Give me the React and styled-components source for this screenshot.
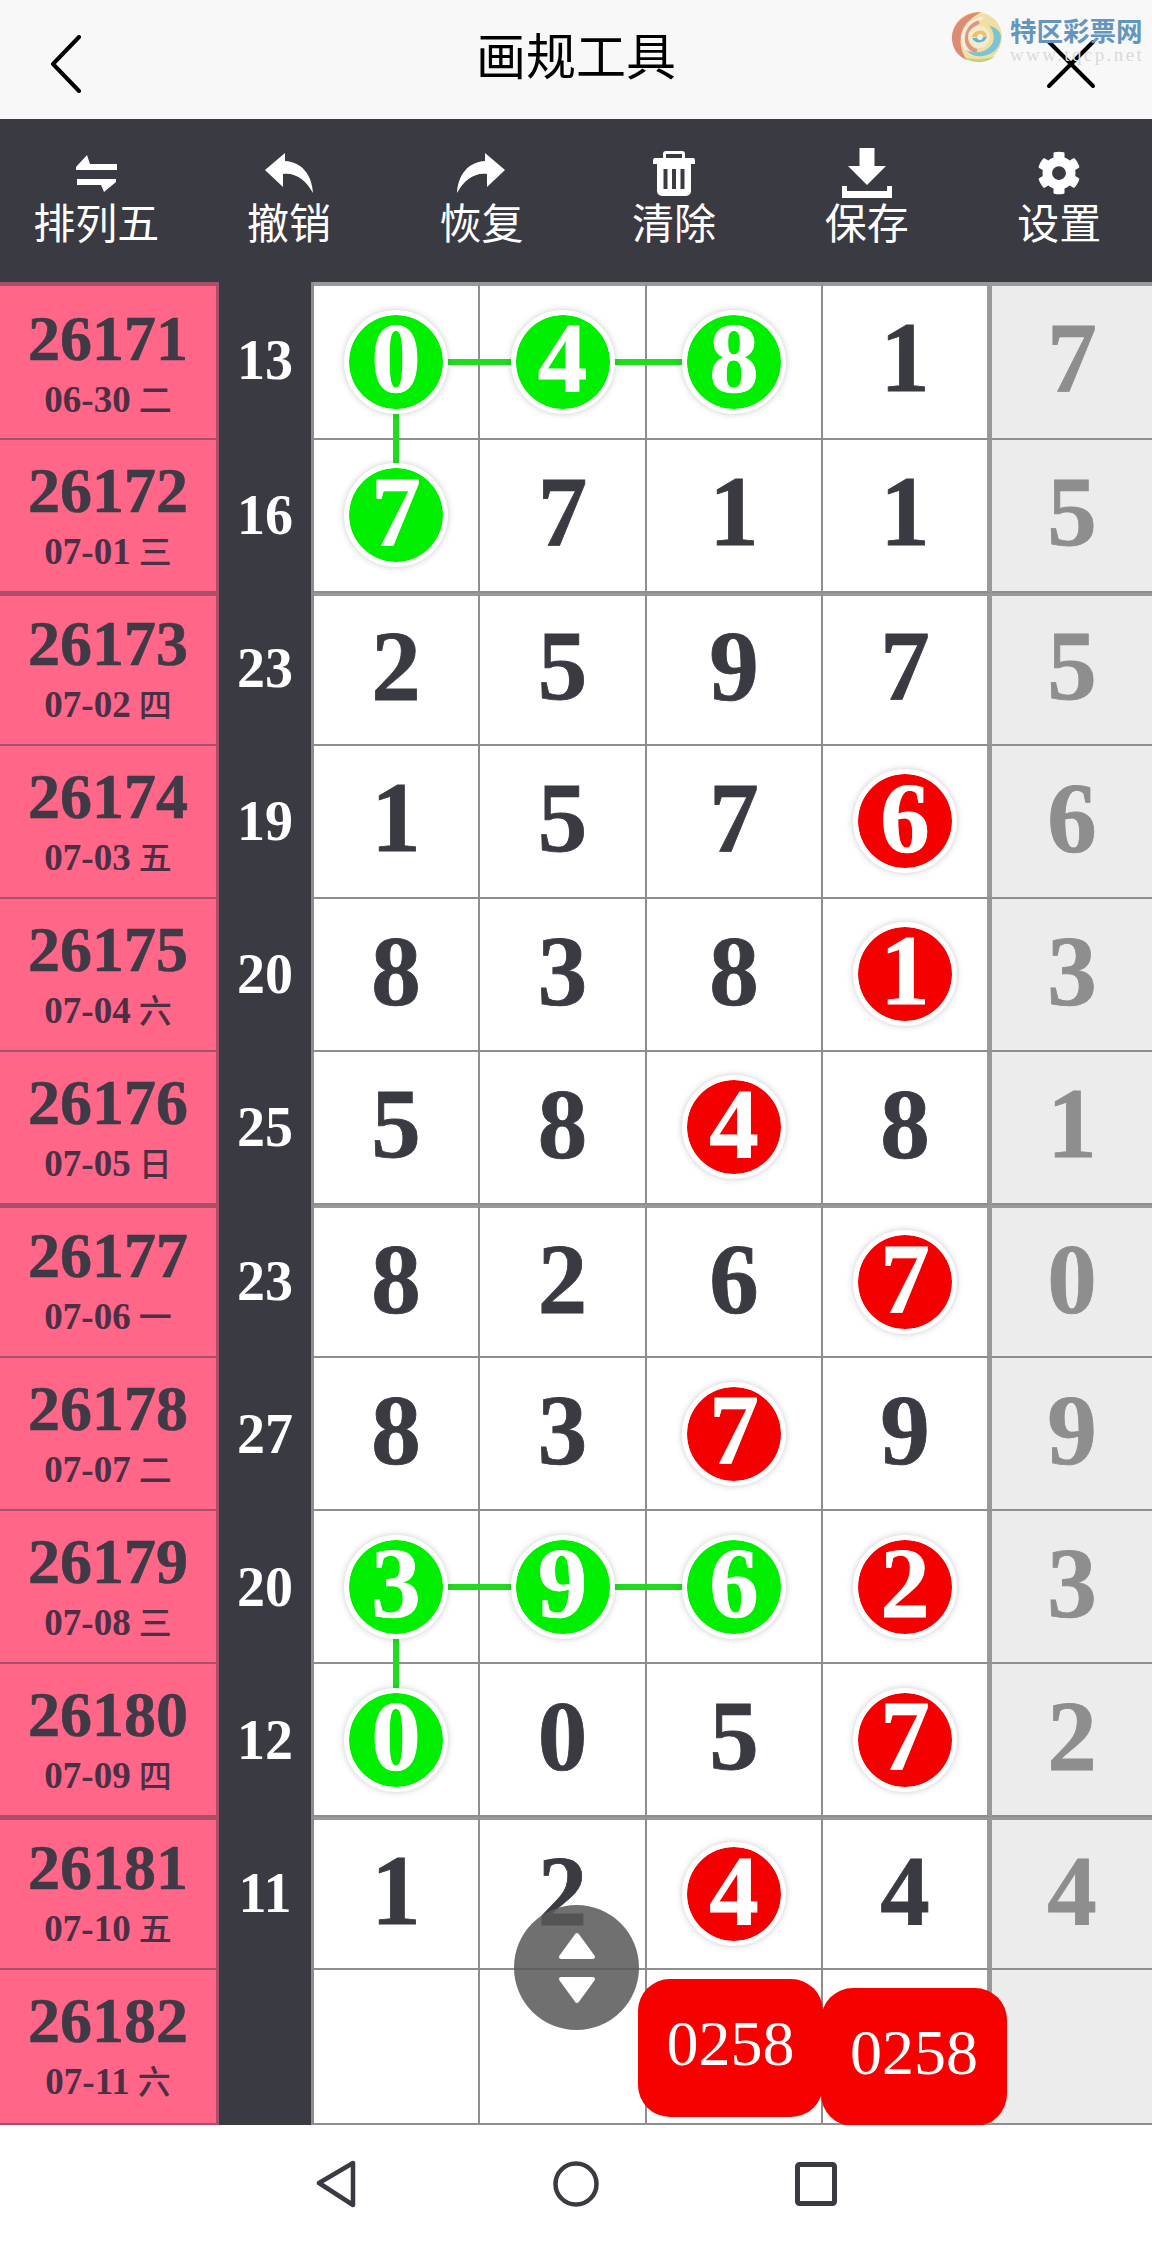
import React from "react";
import styled, { createGlobalStyle } from "styled-components";
import { FaCog } from "react-icons/fa";

const GlobalStyle = createGlobalStyle`
  html, body { margin: 0; padding: 0; background: #fff; }
  * { box-sizing: border-box; }
`;

const rows = [
  { id: "26171", date: "06-30", day: "二", sum: 13, cells: [{ n: 0, ball: "g", right: 167, down: true }, { n: 4, ball: "g", right: 171 }, { n: 8, ball: "g" }, { n: 1 }, { n: 7 }] },
  { id: "26172", date: "07-01", day: "三", sum: 16, cells: [{ n: 7, ball: "g" }, { n: 7 }, { n: 1 }, { n: 1 }, { n: 5 }] },
  { id: "26173", date: "07-02", day: "四", sum: 23, ruled: true, cells: [{ n: 2 }, { n: 5 }, { n: 9 }, { n: 7 }, { n: 5 }] },
  { id: "26174", date: "07-03", day: "五", sum: 19, cells: [{ n: 1 }, { n: 5 }, { n: 7 }, { n: 6, ball: "r" }, { n: 6 }] },
  { id: "26175", date: "07-04", day: "六", sum: 20, cells: [{ n: 8 }, { n: 3 }, { n: 8 }, { n: 1, ball: "r" }, { n: 3 }] },
  { id: "26176", date: "07-05", day: "日", sum: 25, cells: [{ n: 5 }, { n: 8 }, { n: 4, ball: "r" }, { n: 8 }, { n: 1 }] },
  { id: "26177", date: "07-06", day: "一", sum: 23, ruled: true, cells: [{ n: 8 }, { n: 2 }, { n: 6 }, { n: 7, ball: "r" }, { n: 0 }] },
  { id: "26178", date: "07-07", day: "二", sum: 27, cells: [{ n: 8 }, { n: 3 }, { n: 7, ball: "r" }, { n: 9 }, { n: 9 }] },
  { id: "26179", date: "07-08", day: "三", sum: 20, cells: [{ n: 3, ball: "g", right: 167, down: true }, { n: 9, ball: "g", right: 171 }, { n: 6, ball: "g" }, { n: 2, ball: "r" }, { n: 3 }] },
  { id: "26180", date: "07-09", day: "四", sum: 12, cells: [{ n: 0, ball: "g" }, { n: 0 }, { n: 5 }, { n: 7, ball: "r" }, { n: 2 }] },
  { id: "26181", date: "07-10", day: "五", sum: 11, ruled: true, cells: [{ n: 1 }, { n: 2 }, { n: 4, ball: "r" }, { n: 4 }, { n: 4 }] },
  { id: "26182", date: "07-11", day: "六", sum: "", cells: [{}, {}, {}, {}, {}] },
];

const SERIF = `"Liberation Serif", "Noto Sans CJK SC", serif`;
const CJK = `"Noto Sans CJK SC", sans-serif`;

const Page = styled.div`
  width: 1152px;
  height: 2243px;
  display: flex;
  flex-direction: column;
  overflow: hidden;
  background: #fff;
`;

const Header = styled.header`
  position: relative;
  height: 119px;
  flex: none;
  display: flex;
  align-items: center;
  justify-content: space-between;
  padding: 8px 56px 0 50px;
  background: #f8f8f8;
`;

const Title = styled.h1`
  position: absolute;
  left: 0;
  right: 0;
  top: 23px;
  margin: 0;
  text-align: center;
  font: 400 50px/60px ${CJK};
  color: #000;
`;

const Watermark = styled.div`
  position: absolute;
  left: 951px;
  top: 10px;
  display: flex;
  gap: 7px;
`;

const MarkText = styled.div`
  display: flex;
  flex-direction: column;
  padding-top: 5px;
`;

const MarkName = styled.span`
  font: 700 26.5px/30px ${CJK};
  color: #6496bd;
  white-space: nowrap;
`;

const MarkUrl = styled.span`
  font: 400 19px/20px "Liberation Serif", serif;
  letter-spacing: 2.4px;
  color: #d8dadc;
  white-space: nowrap;
`;

const Toolbar = styled.nav`
  height: 163px;
  flex: none;
  display: grid;
  grid-template-columns: repeat(6, 192.6px);
  background: #3a3a42;
`;

const Tool = styled.div`
  display: flex;
  flex-direction: column;
  align-items: center;
  color: #fff;
`;

const ToolIcon = styled.div`
  height: 56px;
  margin-top: 26px;
  display: flex;
  align-items: center;
  justify-content: center;
`;

const ToolLabel = styled.span`
  font: 400 42px/50px ${CJK};
  margin-top: -5px;
  white-space: nowrap;
`;

const Table = styled.main`
  position: relative;
  height: 1843px;
  flex: none;
  overflow: hidden;
  display: grid;
  grid-template-rows: 157.5px repeat(10, 153.1px) 1fr;
`;

const Row = styled.div`
  display: grid;
  grid-template-columns: 219px 95px 166px 167px 176px 169px 160px;
`;

const DateCell = styled.div`
  background: #ff6687;
  border-right: 3px solid #a8506a;
  border-top: ${(p) => (p.$first ? "4px" : p.$ruled ? "3px" : "0")} solid #a8506a;
  border-bottom: 2px solid #a8506a;
  display: flex;
  flex-direction: column;
  align-items: center;
  padding-top: ${(p) => (p.$first ? "23px" : p.$ruled ? "18px" : "21px")};
`;

const Issue = styled.span`
  font: 700 64px/60px ${SERIF};
  color: #3f3a46;
  -webkit-text-stroke: 0.6px #3f3a46;
`;

const DateLine = styled.span`
  margin-top: 6px;
  font: 700 37px/46px ${SERIF};
  color: #4a2f45;
  white-space: nowrap;
`;

const Day = styled.span`
  font: 500 33px/46px ${CJK};
  margin-left: 8px;
`;

const SumCell = styled.div`
  background: #3a3a42;
  border-right: 3px solid #8c8c90;
  display: flex;
  align-items: center;
  justify-content: center;
  padding-bottom: 2px;
  font: 700 56px/1 ${SERIF};
  color: #fff;
`;

const Cell = styled.div`
  position: relative;
  display: flex;
  align-items: center;
  justify-content: center;
  background: ${(p) => (p.$muted ? "#ececec" : "#fff")};
  color: ${(p) => (p.$muted ? "#8e8e8e" : "#3a3a42")};
  border-right: ${(p) => (p.$muted ? "0" : p.$edge ? "5px solid #999" : "2px solid #8e8e8e")};
  border-top: ${(p) => (p.$first ? "4px" : p.$ruled ? "3px" : "0")} solid #999;
  border-bottom: 2px solid #8e8e8e;
  font: 700 99px/1 ${SERIF};
  -webkit-text-stroke: 0.8px currentColor;
`;

const Digit = styled.span`
  margin-top: -8px;
`;

const Ball = styled.span`
  position: relative;
  z-index: 2;
  width: 104px;
  height: 104px;
  flex: none;
  border-radius: 50%;
  display: flex;
  align-items: center;
  justify-content: center;
  border: 5px solid #fff;
  background: ${(p) => (p.$kind === "g" ? "#00ee00" : "#f40000")};
  background-clip: padding-box;
  box-shadow: 0 0 6px rgba(60, 60, 60, 0.28);
  color: #fff;
`;

const LinkRight = styled.i`
  position: absolute;
  z-index: 1;
  left: 50%;
  top: calc(50% - 3px);
  height: 6px;
  background: #1fdc1f;
`;

const LinkDown = styled.i`
  position: absolute;
  z-index: 1;
  left: calc(50% - 3px);
  top: 50%;
  width: 6px;
  height: 153px;
  background: #1fdc1f;
`;

const Scroller = styled.div`
  position: absolute;
  z-index: 5;
  left: 514px;
  top: 1623px;
  width: 125px;
  height: 125px;
  border-radius: 50%;
  background: rgba(88, 88, 88, 0.86);
  display: flex;
  align-items: center;
  justify-content: center;
`;

const Chip = styled.div`
  position: absolute;
  z-index: 4;
  left: ${(p) => p.$left}px;
  top: ${(p) => p.$top}px;
  width: ${(p) => p.$width}px;
  height: 138px;
  padding-bottom: 8px;
  border-radius: 32px;
  background: #f60000;
  color: #fff;
  display: flex;
  align-items: center;
  justify-content: center;
  font: 400 64px/1 "Liberation Serif", serif;
`;

const BottomNav = styled.footer`
  flex: 1;
  background: #fff;
  display: grid;
  grid-template-columns: 42px 46px 42px;
  justify-content: center;
  column-gap: 196px;
  align-items: center;
`;

const BackChevron = () => (
  <svg width="32" height="58" viewBox="0 0 32 58" fill="none" stroke="#000" strokeWidth="4" strokeLinecap="round" strokeLinejoin="round">
    <path d="M29 2 L3 29 L29 56" />
  </svg>
);

const CloseIcon = () => (
  <svg width="50" height="50" viewBox="0 0 50 50" stroke="#000" strokeWidth="4" strokeLinecap="round">
    <path d="M3 3 L47 47 M47 3 L3 47" />
  </svg>
);

const LogoSpiral = () => (
  <svg width="52" height="54" viewBox="0 0 52 54" fill="none">
    <circle cx="26" cy="27" r="25" fill="#f1dfa2" />
    <path d="M30 2 C12 2 0 16 1 30 C2 40 8 47 16 50 C8 40 7 24 15 14 C19 9 25 5 30 2Z" fill="#dc8c74" />
    <path d="M32 8 C20 10 12 18 12 29 C12 37 16 42 22 45" stroke="#f6ebdf" strokeWidth="3" />
    <path d="M28 12 C20 15 16 21 16 29 C16 35 20 40 26 41" stroke="#e0957f" strokeWidth="4" />
    <path d="M12 47 C22 54 36 54 44 46 C34 50 22 50 12 47Z" fill="#bcd57e" />
    <path d="M50 26 C50 36 44 44 32 46 C24 47 18 44 15 40 C24 45 38 42 42 32 C44 26 42 20 38 16 C45 17 49 21 50 26Z" fill="#79c5d6" />
    <circle cx="28" cy="27" r="11" fill="#f4ead0" />
    <path d="M21 27 A8 8 0 0 1 36 25 L28 28Z" fill="#ecc35e" />
    <path d="M21 28 A8 8 0 0 0 36 26 L28 28Z" fill="#5cb8d4" />
    <circle cx="29" cy="27" r="3" fill="#f6efe0" />
  </svg>
);

const SwapIcon = () => (
  <svg width="41" height="37" viewBox="0 0 41 37" fill="#fff">
    <path d="M11 0 L0 12 V15 H41 V9 H14Z" />
    <path d="M1 24 H40 V27 L28 37 L25 30 H1Z" />
  </svg>
);

const UndoIcon = () => (
  <svg width="48" height="40" viewBox="0 0 48 40" fill="#fff">
    <path d="M20 0 L0 17 L18 34 V21 C30 19 41 27 48 40 C47 22 37 9 20 8Z" />
  </svg>
);

const RedoIcon = () => (
  <svg width="48" height="40" viewBox="0 0 48 40" fill="#fff">
    <path d="M28 0 L48 17 L30 34 V21 C18 19 7 27 0 40 C1 22 11 9 28 8Z" />
  </svg>
);

const TrashIcon = () => (
  <svg width="42" height="45" viewBox="0 0 42 45" fill="#fff">
    <path fillRule="evenodd" d="M13 0 H29 A3 3 0 0 1 32 3 V7 H40 A2 2 0 0 1 42 9 V13 H0 V9 A2 2 0 0 1 2 7 H10 V3 A3 3 0 0 1 13 0Z M13 3 V7 H29 V3Z" />
    <path fillRule="evenodd" d="M4 13 H38 V40 A5 5 0 0 1 33 45 H9 A5 5 0 0 1 4 40Z M10.5 18 V38 H14.5 V18Z M19 18 V38 H23 V18Z M27.5 18 V38 H31.5 V18Z" />
  </svg>
);

const DownloadIcon = () => (
  <svg width="50" height="50" viewBox="0 0 50 50" fill="#fff">
    <path d="M17.5 0 H32.5 V18 H44 L25 37 L6 18 H17.5Z" />
    <path d="M0 38 H5 V43 H45 V38 H50 V50 H0Z" />
  </svg>
);

const ScrollArrows = () => (
  <svg width="40" height="72" viewBox="0 0 40 72" fill="#fff" stroke="#fff" strokeWidth="4" strokeLinejoin="round">
    <path d="M20 3 L36 25 H4Z" />
    <path d="M20 69 L36 47 H4Z" />
  </svg>
);

const NavBack = () => (
  <svg width="42" height="48" viewBox="0 0 42 48" fill="none" stroke="#3a3a42" strokeWidth="4.5" strokeLinejoin="round">
    <path d="M38 3 V45 L4 23Z" />
  </svg>
);

const NavHome = () => (
  <svg width="46" height="48" viewBox="0 0 46 48" fill="none" stroke="#3a3a42" strokeWidth="4.5">
    <circle cx="23" cy="24" r="20.5" />
  </svg>
);

const NavRecent = () => (
  <svg width="42" height="44" viewBox="0 0 42 44" fill="none" stroke="#3a3a42" strokeWidth="5" strokeLinejoin="round">
    <rect x="2.5" y="2.5" width="37" height="39" rx="2" />
  </svg>
);

const tools = [
  { label: "排列五", icon: <SwapIcon /> },
  { label: "撤销", icon: <UndoIcon /> },
  { label: "恢复", icon: <RedoIcon /> },
  { label: "清除", icon: <TrashIcon /> },
  { label: "保存", icon: <DownloadIcon /> },
  { label: "设置", icon: <FaCog size={44} /> },
];

const App = () => {
  return (
    <Page>
      <GlobalStyle />
      <Header>
        <BackChevron />
        <Title>画规工具</Title>
        <Watermark>
          <LogoSpiral />
          <MarkText>
            <MarkName>特区彩票网</MarkName>
            <MarkUrl>www.tqcp.net</MarkUrl>
          </MarkText>
        </Watermark>
        <CloseIcon />
      </Header>
      <Toolbar>
        {tools.map((t) => (
          <Tool key={t.label}>
            <ToolIcon>{t.icon}</ToolIcon>
            <ToolLabel>{t.label}</ToolLabel>
          </Tool>
        ))}
      </Toolbar>
      <Table>
        {rows.map((r, i) => (
          <Row key={r.id}>
            <DateCell $first={i === 0} $ruled={r.ruled}>
              <Issue>{r.id}</Issue>
              <DateLine>
                {r.date}
                <Day>{r.day}</Day>
              </DateLine>
            </DateCell>
            <SumCell>{r.sum}</SumCell>
            {r.cells.map((c, j) => (
              <Cell key={j} $first={i === 0} $ruled={r.ruled} $edge={j === 3} $muted={j === 4}>
                {c.right && <LinkRight style={{ width: c.right }} />}
                {c.down && <LinkDown />}
                {c.ball ? (
                  <Ball $kind={c.ball}>
                    <Digit>{c.n}</Digit>
                  </Ball>
                ) : (
                  <Digit>{c.n}</Digit>
                )}
              </Cell>
            ))}
          </Row>
        ))}
        <Scroller>
          <ScrollArrows />
        </Scroller>
        <Chip $left={638} $top={1697} $width={185}>0258</Chip>
        <Chip $left={821} $top={1706} $width={186}>0258</Chip>
      </Table>
      <BottomNav>
        <NavBack />
        <NavHome />
        <NavRecent />
      </BottomNav>
    </Page>
  );
};

export default App;
